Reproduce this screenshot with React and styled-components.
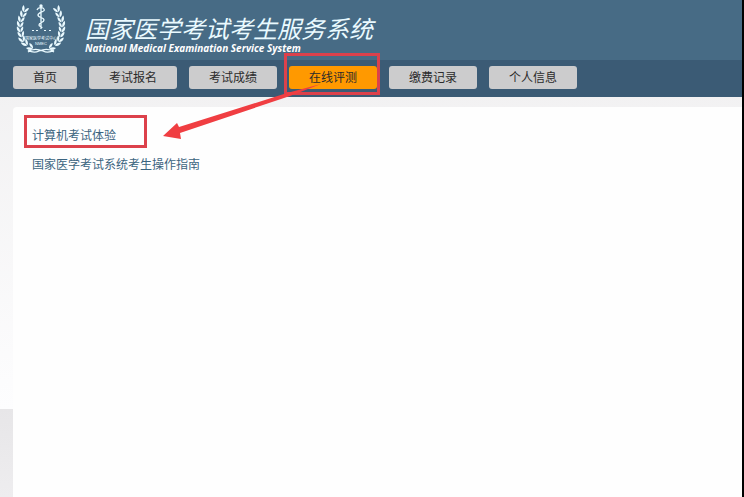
import styled, { createGlobalStyle } from "styled-components";

const menu = [
  { text: "首页" },
  { text: "考试报名" },
  { text: "考试成绩" },
  { text: "在线评测", active: true },
  { text: "缴费记录" },
  { text: "个人信息" },
];

const links = [
  { text: "计算机考试体验", marked: true },
  { text: "国家医学考试系统考生操作指南" },
];

// one side of the laurel wreath: x, y, angle of every pair of leaves
const leaves = [
  [25, 9, 24],
  [23, 14, 16],
  [21, 19, 10],
  [20, 24, 4],
  [20, 29, -4],
  [21, 34, -14],
  [22, 39, -26],
  [25, 43, -42],
  [30, 47, -60],
];

function Branch() {
  return (
    <g>
      {leaves.map(([x, y, angle]) => (
        <g key={y} transform={`translate(${x} ${y}) rotate(${angle})`}>
          <path d="M0 3.400C-3 2.400-3.600-.6-2.800-3C-.8-1.500 .2 .5 0 3.400Z" />
          <path d="M.3 3.400C0 .8 1-1.500 3.200-2.600C3.800 0 2.700 2.200 .3 3.400Z" />
        </g>
      ))}
    </g>
  );
}

function Emblem() {
  return (
    <Logo viewBox="0 0 82 56" aria-hidden="true">
      <Branch />
      <g transform="translate(82 0) scale(-1 1)">
        <Branch />
      </g>
      <path
        d="M28 52C33 48 38 49 43 51C47 53 51 52 54 50M54 52C49 48 44 49 39 51C35 53 31 52 28 50"
        fill="none"
        stroke="#eafaff"
        strokeWidth="1.300"
      />
      <circle cx="41" cy="6" r="1.700" />
      <path
        d="M41 5V29M37 10C38 7 43 7 44 9C46 12 38 12 38 15C38 18 44 17 44 20C44 23 39 22 39 25C39 27 42 26 42 28"
        fill="none"
        stroke="#eafaff"
        strokeWidth="1.300"
      />
      <path d="M32 30h2v1h-2zM36 30h2v1h-2zM44 30h2v1h-2zM49 30h2v1h-2z" />
      <text x="41" y="40" fontSize="4" textAnchor="middle">
        国家医学考试中心
      </text>
      <text x="41" y="45" fontSize="4" textAnchor="middle">
        NMEC
      </text>
    </Logo>
  );
}

export default function App() {
  return (
    <Page>
      <GlobalStyle />
      <Header>
        <Emblem />
        <div>
          <Title>国家医学考试考生服务系统</Title>
          <Subtitle>National Medical Examination Service System</Subtitle>
        </div>
      </Header>
      <Nav>
        {menu.map((item) => (
          <MenuItem key={item.text}>
            <MenuButton type="button" $active={item.active}>
              {item.text}
            </MenuButton>
            {item.active && <MenuMark />}
          </MenuItem>
        ))}
      </Nav>
      <Content>
        <LinkList>
          {links.map((link) => (
            <li key={link.text}>
              <TextLink href="#">{link.text}</TextLink>
              {link.marked && <LinkMark />}
            </li>
          ))}
        </LinkList>
      </Content>
      <Arrow viewBox="0 0 170 60" aria-hidden="true">
        <path d="M2 56L16 43L18 47L126 13L160 4L129 16L19 53L20 59Z" />
      </Arrow>
    </Page>
  );
}

const GlobalStyle = createGlobalStyle`
  * {
    box-sizing: border-box;
  }
  body {
    margin: 0;
    font-family: "Liberation Sans", "Noto Sans CJK SC", sans-serif;
    font-size: 12px;
  }
`;

const Page = styled.div`
  position: relative;
  display: flex;
  flex-direction: column;
  min-height: 100vh;
  border-right: 2px solid #000;
  background: linear-gradient(#efeeef, #fdfdfe 409px, #e7e6e8 409px, #eeedef);
`;

const Header = styled.header`
  display: flex;
  gap: 3px;
  height: 60px;
  background-color: #476b85;
`;

const Logo = styled.svg`
  width: 82px;
  height: 56px;
  fill: #eafaff;
`;

const Title = styled.h1`
  margin: 14px 0 0;
  color: #eafaff;
  font-family: "Noto Sans CJK SC", sans-serif;
  font-size: 24px;
  font-style: italic;
  font-weight: 400;
  line-height: 28px;
  white-space: nowrap;
`;

const Subtitle = styled.p`
  margin: 0;
  color: #fff;
  font-family: "Open Sans", sans-serif;
  font-size: 10px;
  font-style: italic;
  font-weight: 700;
  line-height: 12px;
  white-space: nowrap;
`;

const Nav = styled.nav`
  display: flex;
  gap: 12px;
  padding: 6px 13px 8px;
  background-color: #3b5b75;
`;

const MenuItem = styled.div`
  position: relative;
`;

const MenuButton = styled.button`
  display: block;
  height: 23px;
  padding: 2px 20px 0;
  border: none;
  border-radius: 3px;
  background-color: ${(props) => (props.$active ? "#ff9900" : "#cccccd")};
  color: #2b2b2b;
  font-family: inherit;
  font-size: 12px;
  line-height: 21px;
  white-space: nowrap;
  cursor: pointer;
`;

const Mark = styled.span`
  position: absolute;
  border: 3px solid #dc414b;
  pointer-events: none;
`;

const MenuMark = styled(Mark)`
  inset: -13px -3px -6px -5px;
`;

const LinkMark = styled(Mark)`
  top: -7px;
  left: -8px;
  width: 123px;
  height: 33px;
`;

const Content = styled.main`
  flex: 1;
  margin: 10px 0 0 13px;
  padding: 15px 19px;
  border-top-left-radius: 4px;
  background-color: #fefefe;
`;

const LinkList = styled.ul`
  margin: 0;
  padding: 0;
  list-style: none;
  li {
    position: relative;
    height: 29px;
    line-height: 29px;
  }
`;

const TextLink = styled.a`
  color: #3b6480;
  text-decoration: none;
`;

const Arrow = styled.svg`
  position: absolute;
  top: 80px;
  left: 161px;
  width: 170px;
  height: 60px;
  fill: #f03e42;
  pointer-events: none;
`;
